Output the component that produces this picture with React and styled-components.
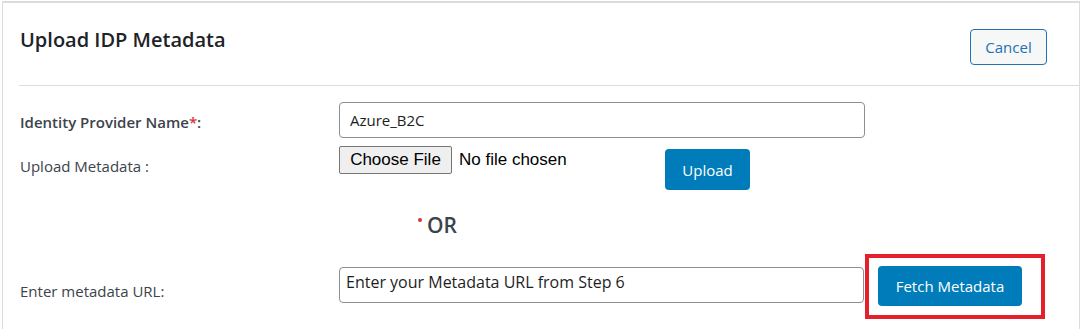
import styled, { createGlobalStyle } from 'styled-components';

const GlobalStyle = createGlobalStyle`
  html, body {
    margin: 0;
    padding: 0;
    background: #fff;
  }
  body {
    font-family: "Open Sans", "Noto Sans", sans-serif;
    color: #3c434a;
  }
  * { box-sizing: border-box; }
`;

const Page = styled.div`
  padding: 1px 4px 0 2px;
  min-height: 329px;
`;

const Card = styled.div`
  background: #fff;
  border: 1px solid #dcdcde;
  border-top-width: 2px;
  border-bottom: none;
  min-height: 328px;
`;

const Header = styled.div`
  display: flex;
  justify-content: space-between;
  align-items: flex-start;
  height: 83px;
  margin-left: 16px;
  padding-right: 32px;
  border-bottom: 1px solid #dcdcde;
`;

const Title = styled.h2`
  margin: 23px 0 0 1px;
  font-size: 20px;
  line-height: 28px;
  font-weight: 600;
  color: #1d2327;
`;

const CancelButton = styled.button`
  margin-top: 26px;
  width: 77px;
  height: 36px;
  padding: 0;
  border: 1px solid #2271b1;
  border-radius: 4px;
  background: #f6f7f7;
  color: #2271b1;
  font-family: inherit;
  font-size: 15px;
  font-weight: 500;
  cursor: pointer;
`;

const Body = styled.div`
  padding-left: 17px;
`;

const Row = styled.div`
  display: grid;
  grid-template-columns: 319px 1fr;
  align-items: start;
  margin-top: ${({ top }) => top}px;
`;

const Label = styled.label`
  display: block;
  padding-top: ${({ offset }) => offset}px;
  font-size: 15px;
  line-height: 20px;
  font-weight: ${({ strong }) => (strong ? 600 : 400)};
  color: #3c434a;
`;

const Req = styled.span`
  color: #d63638;
`;

const TextInput = styled.input`
  display: block;
  width: ${({ w }) => w}px;
  height: 36px;
  margin-top: ${({ top }) => top || 0}px;
  padding: ${({ raised }) => (raised ? '0 6px 6px 6px' : '0 10px')};
  border: 1px solid #8c8f94;
  border-radius: 4px;
  background: #fff;
  font-family: "Open Sans", "Noto Sans", sans-serif;
  font-size: ${({ size }) => size || 16}px;
  color: #1e1e1e;
  outline: none;
`;

const Field = styled.div`
  display: flex;
  align-items: flex-start;
`;

const FilePicker = styled.div`
  display: flex;
  align-items: center;
  width: 326px;
  gap: 7px;
`;

const ChooseButton = styled.button`
  width: 113px;
  height: 28px;
  padding: 0;
  border: 1px solid #767676;
  border-radius: 2px;
  background: #efefef;
  color: #000;
  font-family: "Liberation Sans", Arial, sans-serif;
  font-size: 17px;
`;

const FileName = styled.span`
  font-family: "Liberation Sans", Arial, sans-serif;
  font-size: 17px;
  color: #000;
`;

const PrimaryButton = styled.button`
  width: ${({ w }) => w}px;
  height: ${({ h }) => h}px;
  margin-top: ${({ top }) => top || 0}px;
  padding: 0;
  border: none;
  border-radius: 4px;
  background: #007cba;
  color: #fff;
  font-family: inherit;
  font-size: 15px;
  font-weight: 500;
  cursor: pointer;
`;

const OrLine = styled.div`
  display: flex;
  align-items: flex-start;
  padding-left: 79px;
  font-size: 21px;
  line-height: 28px;
  font-weight: 600;
  color: #3c434a;
`;

const Dot = styled.span`
  width: 4px;
  height: 4px;
  margin: 7px 5px 0 0;
  border-radius: 50%;
  background: #d63638;
`;

const Highlight = styled.div`
  padding: 8px 19px 9px 9px;
  border: 4px solid #e3202b;
  margin-left: 1px;
`;

export default function App() {
  return (
    <>
      <GlobalStyle />
      <Page>
        <Card>
          <Header>
            <Title>Upload IDP Metadata</Title>
            <CancelButton>Cancel</CancelButton>
          </Header>
          <Body>
            <Row top={16}>
              <Label strong offset={10}>
                Identity Provider Name<Req>*</Req>:
              </Label>
              <TextInput w={526} size={15} defaultValue="Azure_B2C" />
            </Row>
            <Row top={8}>
              <Label offset={10}>Upload Metadata :</Label>
              <Field>
                <FilePicker>
                  <ChooseButton>Choose File</ChooseButton>
                  <FileName>No file chosen</FileName>
                </FilePicker>
                <PrimaryButton w={85} h={41} top={3}>Upload</PrimaryButton>
              </Field>
            </Row>
            <Row top={21}>
              <span />
              <OrLine>
                <Dot />
                OR
              </OrLine>
            </Row>
            <Row top={15}>
              <Label offset={27}>Enter metadata URL:</Label>
              <Field>
                <TextInput
                  w={525}
                  top={13}
                  raised
                  defaultValue="Enter your Metadata URL from Step 6"
                />
                <Highlight>
                  <PrimaryButton w={144} h={40}>Fetch Metadata</PrimaryButton>
                </Highlight>
              </Field>
            </Row>
          </Body>
        </Card>
      </Page>
    </>
  );
}
